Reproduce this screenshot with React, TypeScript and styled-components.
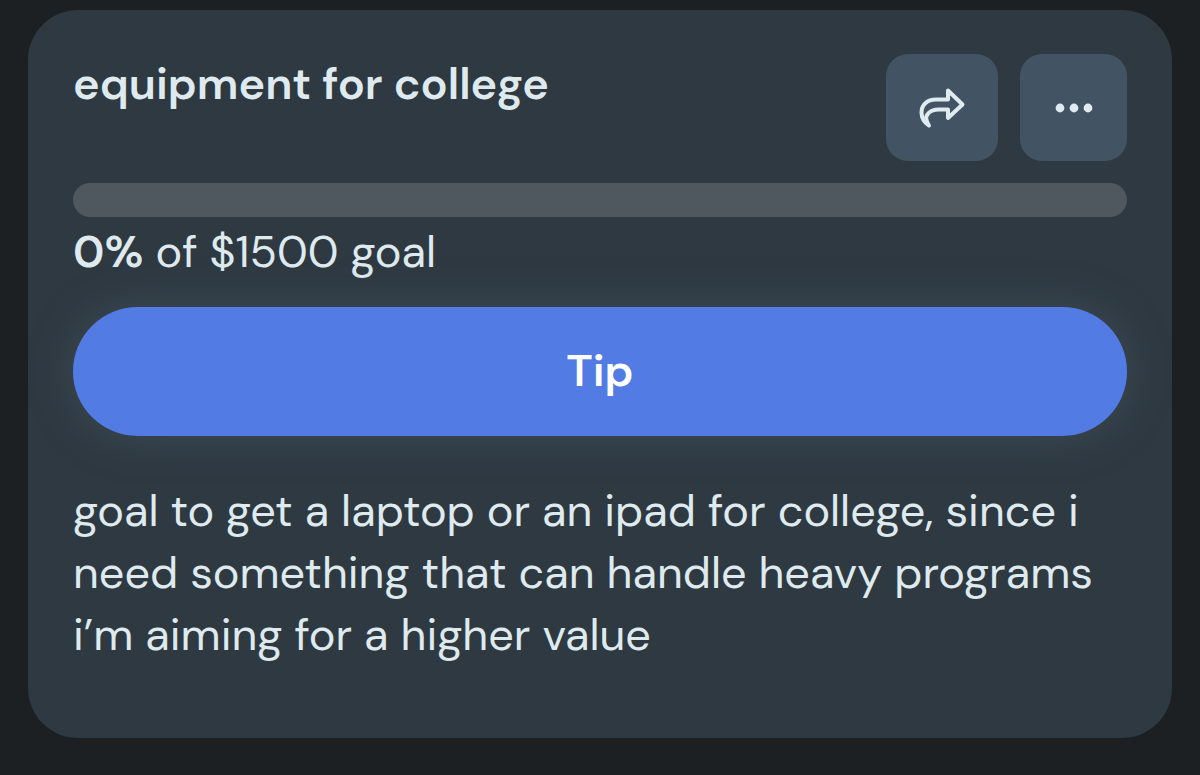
import React from "react";
import styled, { createGlobalStyle } from "styled-components";

const GlobalStyle = createGlobalStyle`
  *, *::before, *::after { box-sizing: border-box; }
  html { background: #1c2023; }
  body {
    margin: 0;
    background: #1c2023;
    color: #dfeaee;
    font-family: "DM Sans", "Open Sans", sans-serif;
    font-size: 45px;
    line-height: 62px;
  }
`;

const Page = styled.main`
  padding: 10px 28px 36px;
`;

const Card = styled.article`
  display: flex;
  flex-direction: column;
  padding: 44px 45px 72px;
  border-radius: 50px;
  background: #2e3942;
`;

const Header = styled.header`
  display: flex;
  justify-content: space-between;
  align-items: flex-start;
  gap: 22px;
`;

const Title = styled.h1`
  margin: 0;
  font-size: 45px;
  line-height: 60px;
  font-weight: 600;
`;

const Actions = styled.div`
  display: flex;
  flex: none;
  gap: 22px;
`;

const IconButton = styled.button<{ $wide?: boolean }>`
  display: flex;
  align-items: center;
  justify-content: center;
  width: ${({ $wide }) => ($wide ? 112 : 107)}px;
  height: 107px;
  padding: 0;
  border: 0;
  border-radius: 22px;
  background: #425463;
  color: #dfeaf1;
  cursor: pointer;
`;

const Track = styled.div`
  height: 34px;
  margin-top: 22px;
  overflow: hidden;
  border-radius: 17px;
  background: #4f585f;
`;

const Fill = styled.div`
  height: 100%;
  background: #527ce4;
`;

const GoalText = styled.p`
  margin: 4px 0 24px;
`;

const Percent = styled.strong`
  font-weight: 600;
`;

const TipButton = styled.button`
  height: 129px;
  padding: 0 45px 2px;
  border: 0;
  border-radius: 65px;
  background: #527ce4;
  box-shadow: 0 0 45px rgba(90, 104, 112, 0.4);
  color: #ffffff;
  font: inherit;
  font-weight: 600;
  cursor: pointer;
`;

const Description = styled.p`
  margin: 44px 0 0;
`;

const ShareIcon = () => (
  <svg width="48" height="44" viewBox="0 0 48 44" fill="none" aria-hidden="true">
    <path
      d="M30 4.500 L44.500 18.500 L30 32 V23.500 H20.500 C12 23.500 7 29 8.500 34 C9 36.500 10 38 11 39.500 C5.500 36 3.500 31 3.500 26.500 C3.500 19 9 13.500 18 13.500 H30 Z"
      stroke="currentColor"
      strokeWidth="4"
      strokeLinejoin="round"
      strokeLinecap="round"
    />
  </svg>
);

const MoreIcon = () => (
  <svg width="38" height="10" viewBox="0 0 38 10" fill="currentColor" aria-hidden="true">
    <circle cx="5" cy="5" r="4.400" />
    <circle cx="19" cy="5" r="4.400" />
    <circle cx="33" cy="5" r="4.400" />
  </svg>
);

const percent = 0;

export default function App() {
  return (
    <>
      <GlobalStyle />
      <Page>
        <Card>
          <Header>
            <Title>equipment for college</Title>
            <Actions>
              <IconButton type="button" $wide aria-label="Share">
                <ShareIcon />
              </IconButton>
              <IconButton type="button" aria-label="More options">
                <MoreIcon />
              </IconButton>
            </Actions>
          </Header>
          <Track role="progressbar" aria-label="Goal progress" aria-valuenow={percent} aria-valuemin={0} aria-valuemax={100}>
            <Fill style={{ width: `${percent}%` }} />
          </Track>
          <GoalText>
            <Percent>{percent}%</Percent> of $1500 goal
          </GoalText>
          <TipButton type="button">Tip</TipButton>
          <Description>
            goal to get a laptop or an ipad for college, since i need something that can handle heavy programs i’m aiming for a higher value
          </Description>
        </Card>
      </Page>
    </>
  );
}
